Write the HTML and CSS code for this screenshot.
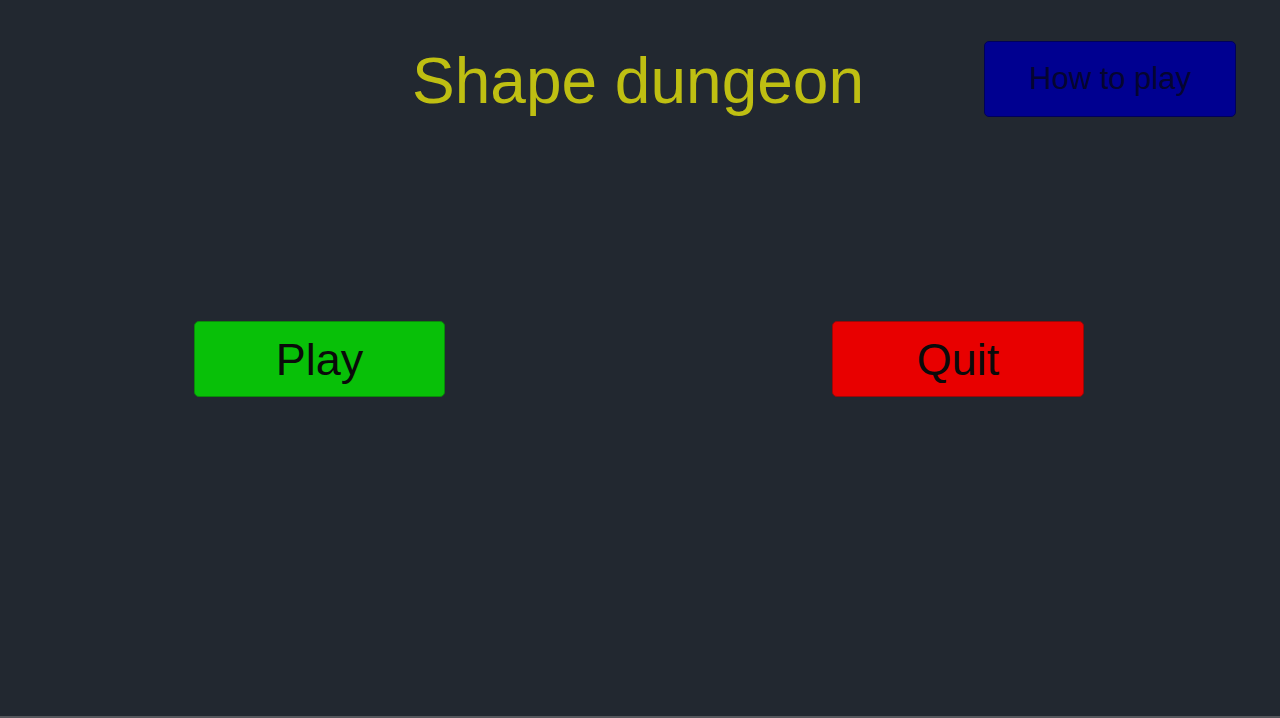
FILE: index.html
```html
<!DOCTYPE html>
<html>
<head>
<meta charset="utf-8">
<link rel="stylesheet" href="styles.css">
</head>
<body>
<div class="screen">
  <header class="header">
    <div class="spacer"></div>
    <h1 class="title">Shape dungeon</h1>
    <div class="right">
      <button class="btn btn-help">How to play</button>
    </div>
  </header>
  <main class="actions">
    <button class="btn btn-big btn-play">Play</button>
    <button class="btn btn-big btn-quit">Quit</button>
  </main>
</div>
</body>
</html>
```

FILE: styles.css
```css
html, body {
  margin: 0;
  padding: 0;
  height: 100%;
}
body {
  background: #222830;
  font-family: "Liberation Sans", Arial, sans-serif;
  overflow: hidden;
}
.screen {
  height: 716px;
  border-bottom: 2px solid #55575c;
  display: flex;
  flex-direction: column;
}
.header {
  display: grid;
  grid-template-columns: 1fr auto 1fr;
  align-items: center;
  padding-top: 41px;
}
.title {
  margin: 0;
  font-size: 64px;
  font-weight: normal;
  color: #bfbf12;
  line-height: 76px;
  position: relative;
  top: 2px;
  left: -2px;
}
.right {
  display: flex;
  justify-content: flex-end;
  padding-right: 44px;
}
.btn {
  font-family: "Liberation Sans", Arial, sans-serif;
  color: #0a0a0a;
  border-radius: 5px;
  padding: 0;
  cursor: pointer;
}
.btn-help {
  width: 252px;
  height: 76px;
  font-size: 31px;
  background: #000090;
  border: 1px solid #00005a;
  color: #050530;
}
.actions {
  display: flex;
  padding-left: 194px;
  margin-top: 204px;
  gap: 387px;
}
.btn-big {
  width: 251px;
  height: 76px;
  font-size: 45px;
  padding-top: 2px;
}
.btn-play {
  background: #08c008;
  border: 1px solid #0a8a0a;
}
.btn-quit {
  width: 252px;
  background: #e80000;
  border: 1px solid #9a0808;
}
```
